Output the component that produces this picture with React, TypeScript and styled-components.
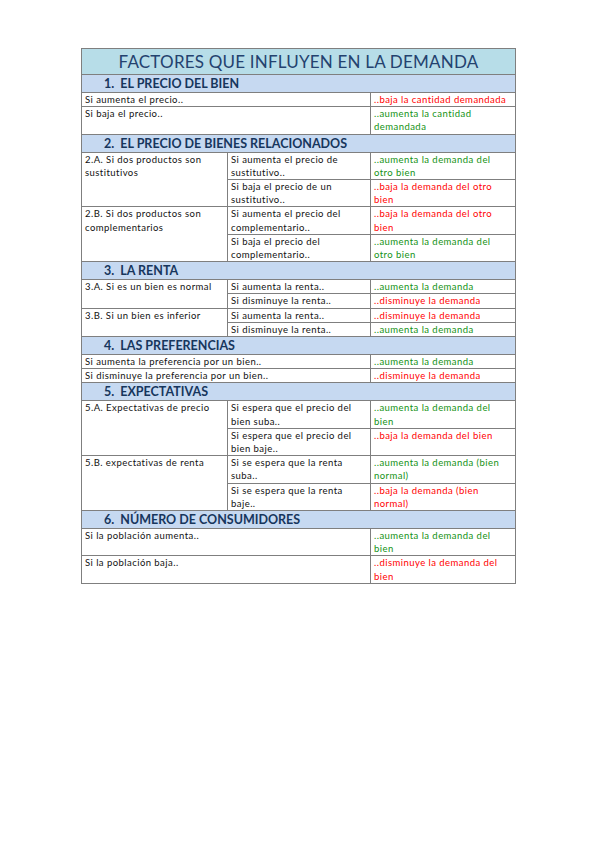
import React from 'react'
import styled, { createGlobalStyle } from 'styled-components'

const GlobalStyle = createGlobalStyle`
  html, body {
    margin: 0;
    padding: 0;
    background: #ffffff;
  }
  body {
    font-family: Lato, "Open Sans", sans-serif;
  }
`

const Page = styled.div`
  width: 599px;
  height: 848px;
  padding: 48px 0 0 81px;
  box-sizing: border-box;
`

const Table = styled.table`
  width: 435px;
  border-collapse: collapse;
  table-layout: fixed;
  border: 1.5px solid #7f7f7f;
`

const Title = styled.th`
  background: #b7dde8;
  color: #24426f;
  font-weight: 400;
  font-size: 17px;
  height: 25px;
  padding: 0;
  line-height: 25px;
  border: 1px solid #7f7f7f;
  letter-spacing: 0.2px;
`

const Section = styled.th`
  background: #c6d9f1;
  color: #17365d;
  font-weight: 700;
  font-size: 12.5px;
  text-align: left;
  padding: 0 0 0 22px;
  height: 17px;
  line-height: 17px;
  border: 1px solid #7f7f7f;
`

const Cell = styled.td<{ $tone?: 'up' | 'down' }>`
  font-size: 9.5px;
  line-height: 13.2px;
  letter-spacing: 0.45px;
  color: ${p => (p.$tone === 'up' ? '#139213' : p.$tone === 'down' ? '#ff0000' : '#111111')};
  vertical-align: top;
  padding: 0 3px;
  border: 1px solid #7f7f7f;
  overflow: hidden;
`

type Tone = 'up' | 'down'
type Sub = { cond: string; result: string; tone: Tone }
type Group = { label: string; subs: Sub[] }
type Simple = { cond: string; result: string; tone: Tone }

type Block =
  | { title: string; kind: 'simple'; rows: Simple[] }
  | { title: string; kind: 'group'; groups: Group[] }

const blocks: Block[] = [
  {
    title: '1.\u00a0\u00a0EL PRECIO DEL BIEN',
    kind: 'simple',
    rows: [
      { cond: 'Si aumenta el precio..', result: '..baja la cantidad demandada', tone: 'down' },
      { cond: 'Si baja el precio..', result: '..aumenta la cantidad demandada', tone: 'up' },
    ],
  },
  {
    title: '2.\u00a0\u00a0EL PRECIO DE BIENES RELACIONADOS',
    kind: 'group',
    groups: [
      {
        label: '2.A. Si dos productos son sustitutivos',
        subs: [
          { cond: 'Si aumenta el precio de sustitutivo..', result: '..aumenta la demanda del otro bien', tone: 'up' },
          { cond: 'Si baja el precio de un sustitutivo..', result: '..baja la demanda del otro bien', tone: 'down' },
        ],
      },
      {
        label: '2.B. Si dos productos son complementarios',
        subs: [
          { cond: 'Si aumenta el precio del complementario..', result: '..baja la demanda del otro bien', tone: 'down' },
          { cond: 'Si baja el precio del complementario..', result: '..aumenta la demanda del otro bien', tone: 'up' },
        ],
      },
    ],
  },
  {
    title: '3.\u00a0\u00a0LA RENTA',
    kind: 'group',
    groups: [
      {
        label: '3.A. Si es un bien es normal',
        subs: [
          { cond: 'Si aumenta la renta..', result: '..aumenta la demanda', tone: 'up' },
          { cond: 'Si disminuye la renta..', result: '..disminuye la demanda', tone: 'down' },
        ],
      },
      {
        label: '3.B. Si un bien es inferior',
        subs: [
          { cond: 'Si aumenta la renta..', result: '..disminuye la demanda', tone: 'down' },
          { cond: 'Si disminuye la renta..', result: '..aumenta la demanda', tone: 'up' },
        ],
      },
    ],
  },
  {
    title: '4.\u00a0\u00a0LAS PREFERENCIAS',
    kind: 'simple',
    rows: [
      { cond: 'Si aumenta la preferencia por un bien..', result: '..aumenta la demanda', tone: 'up' },
      { cond: 'Si disminuye la preferencia por un bien..', result: '..disminuye la demanda', tone: 'down' },
    ],
  },
  {
    title: '5.\u00a0\u00a0EXPECTATIVAS',
    kind: 'group',
    groups: [
      {
        label: '5.A. Expectativas de precio',
        subs: [
          { cond: 'Si espera que el precio del bien suba..', result: '..aumenta la demanda del bien', tone: 'up' },
          { cond: 'Si espera que el precio del bien baje..', result: '..baja la demanda del bien', tone: 'down' },
        ],
      },
      {
        label: '5.B. expectativas de renta',
        subs: [
          { cond: 'Si se espera que la renta suba..', result: '..aumenta la demanda (bien normal)', tone: 'up' },
          { cond: 'Si se espera que la renta baje..', result: '..baja la demanda (bien normal)', tone: 'down' },
        ],
      },
    ],
  },
  {
    title: '6.\u00a0\u00a0NÚMERO DE CONSUMIDORES',
    kind: 'simple',
    rows: [
      { cond: 'Si la población aumenta..', result: '..aumenta la demanda del bien', tone: 'up' },
      { cond: 'Si la población baja..', result: '..disminuye la demanda del bien', tone: 'down' },
    ],
  },
]

export default function App() {
  return (
    <>
      <GlobalStyle />
      <Page>
        <Table>
          <colgroup>
            <col style={{ width: 146 }} />
            <col style={{ width: 143 }} />
            <col />
          </colgroup>
          <tbody>
            <tr>
              <Title colSpan={3}>FACTORES QUE INFLUYEN EN LA DEMANDA</Title>
            </tr>
            {blocks.map(block => (
              <React.Fragment key={block.title}>
                <tr>
                  <Section colSpan={3}>{block.title}</Section>
                </tr>
                {block.kind === 'simple'
                  ? block.rows.map(r => (
                      <tr key={r.cond}>
                        <Cell colSpan={2}>{r.cond}</Cell>
                        <Cell $tone={r.tone}>{r.result}</Cell>
                      </tr>
                    ))
                  : block.groups.map(g =>
                      g.subs.map((s, i) => (
                        <tr key={g.label + i}>
                          {i === 0 && <Cell rowSpan={g.subs.length}>{g.label}</Cell>}
                          <Cell>{s.cond}</Cell>
                          <Cell $tone={s.tone}>{s.result}</Cell>
                        </tr>
                      ))
                    )}
              </React.Fragment>
            ))}
          </tbody>
        </Table>
      </Page>
    </>
  )
}
